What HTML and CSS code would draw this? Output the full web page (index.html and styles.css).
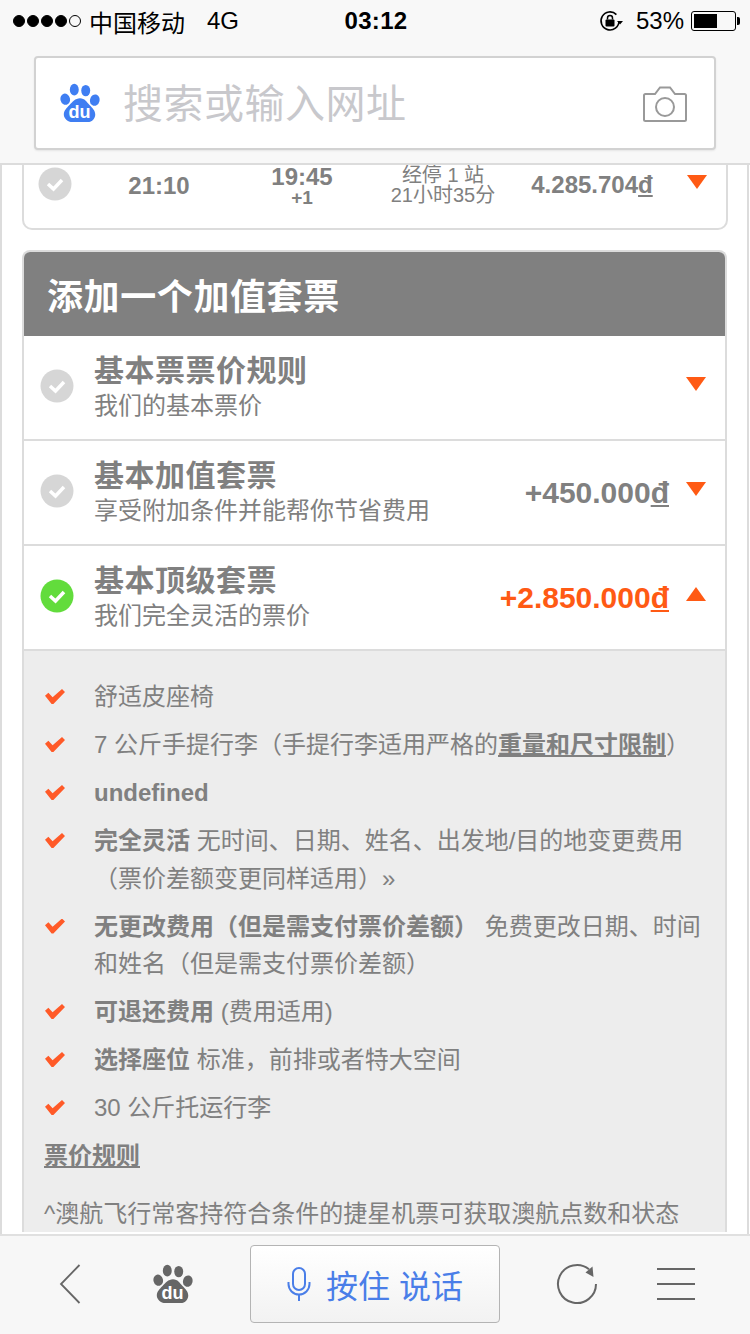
FILE: index.html
```html
<!DOCTYPE html>
<html lang="zh">
<head>
<meta charset="utf-8">
<title>添加一个加值套票</title>
<link rel="stylesheet" href="styles.css">
</head>
<body>
<div class="app">
  <header class="chrome">
    <div class="status">
      <div class="status-left">
        <span class="signal"><i class="on"></i><i class="on"></i><i class="on"></i><i class="on"></i><i></i></span>
        <span class="carrier">中国移动</span>
        <span class="net">4G</span>
      </div>
      <div class="clock">03:12</div>
      <div class="status-right">
        <svg class="lock" width="24" height="22" viewBox="0 0 24 22"><path d="M20 11a9 9 0 1 1-2.600-6.400" fill="none" stroke="#000" stroke-width="1.600"/><path d="M18 11h6l-3 3.500z" fill="#000"/><rect x="6.500" y="9.500" width="9" height="7" rx="1" fill="#000"/><path d="M8.500 9.500V8a2.500 2.500 0 0 1 5 0v1.500" fill="none" stroke="#000" stroke-width="1.500"/></svg>
        <span class="pct">53%</span>
        <span class="battery"><span class="battery-fill"></span></span><span class="battery-tip"></span>
      </div>
    </div>
    <div class="search">
      <svg class="paw" width="40" height="40" viewBox="0 0 42 42"><g fill="#3f7ef2"><ellipse cx="5.500" cy="17" rx="5" ry="6" transform="rotate(-15 5.500 17)"/><ellipse cx="15" cy="7" rx="4.700" ry="6.200"/><ellipse cx="27" cy="8" rx="4.700" ry="6"/><ellipse cx="36.500" cy="18" rx="5" ry="6" transform="rotate(15 36.500 18)"/><path d="M21 16c5 0 7 4 10 7s6 6 6 10-3 8-8 8H13c-5 0-9-4-9-8s3-7 6-10 6-7 11-7z"/></g><text class="paw-text" x="20.500" y="37" text-anchor="middle">du</text></svg>
      <span class="placeholder">搜索或输入网址</span>
      <svg class="camera" width="46" height="40" viewBox="0 0 46 40"><path d="M2 12.500a1.500 1.500 0 0 1 1.500-1.500H13l5-6.500h10l5 6.500h9.500a1.500 1.500 0 0 1 1.500 1.500v24a1.500 1.500 0 0 1-1.500 1.500h-39A1.500 1.500 0 0 1 2 36.500z" fill="none" stroke="#999" stroke-width="2"/><circle cx="23" cy="24" r="9" fill="none" stroke="#999" stroke-width="2"/></svg>
    </div>
  </header>

  <main class="page">
    <section class="flight-card">
      <div class="flight-row">
        <span class="flight-check"><svg width="34" height="34" viewBox="0 0 34 34"><circle cx="17" cy="17" r="16.500" fill="#d6d6d6"/><path d="M10 17l5.500 5L24 13" fill="none" stroke="#fff" stroke-width="3.500"/></svg></span>
        <span class="f-time">21:10</span>
        <span class="f-time f-arr">19:45<small>+1</small></span>
        <span class="f-stops">经停 1 站<br>21小时35分</span>
        <span class="f-price">4.285.704<u class="dong">đ</u></span>
        <span class="tri down f-tri"></span>
      </div>
    </section>

    <section class="offers">
      <h2 class="offers-head">添加一个加值套票</h2>

      <div class="offer">
        <svg class="tick" width="34" height="34" viewBox="0 0 34 34"><circle cx="17" cy="17" r="16.500" fill="#d6d6d6"/><path d="M10 17l5.500 5L24 13" fill="none" stroke="#fff" stroke-width="3.500"/></svg>
        <div class="offer-text"><div class="offer-title">基本票票价规则</div><div class="offer-sub">我们的基本票价</div></div>
        <span class="tri down"></span>
      </div>

      <div class="offer">
        <svg class="tick" width="34" height="34" viewBox="0 0 34 34"><circle cx="17" cy="17" r="16.500" fill="#d6d6d6"/><path d="M10 17l5.500 5L24 13" fill="none" stroke="#fff" stroke-width="3.500"/></svg>
        <div class="offer-text"><div class="offer-title">基本加值套票</div><div class="offer-sub">享受附加条件并能帮你节省费用</div></div>
        <span class="offer-price">+450.000<u class="dong">đ</u></span>
        <span class="tri down"></span>
      </div>

      <div class="offer">
        <svg class="tick" width="34" height="34" viewBox="0 0 34 34"><circle cx="17" cy="17" r="16.500" fill="#62dc3c"/><path d="M10 17l5.500 5L24 13" fill="none" stroke="#fff" stroke-width="3.500"/></svg>
        <div class="offer-text"><div class="offer-title">基本顶级套票</div><div class="offer-sub">我们完全灵活的票价</div></div>
        <span class="offer-price active">+2.850.000<u class="dong">đ</u></span>
        <span class="tri up"></span>
      </div>

      <div class="details">
        <ul class="features">
          <li>舒适皮座椅</li>
          <li>7 公斤手提行李（手提行李适用严格的<b class="link">重量和尺寸限制</b>）</li>
          <li><b>undefined</b></li>
          <li><b>完全灵活</b> 无时间、日期、姓名、出发地/目的地变更费用（票价差额变更同样适用）»</li>
          <li><b>无更改费用（但是需支付票价差额）</b> 免费更改日期、时间和姓名（但是需支付票价差额）</li>
          <li><b>可退还费用</b> (费用适用)</li>
          <li><b>选择座位</b> 标准，前排或者特大空间</li>
          <li>30 公斤托运行李</li>
        </ul>
        <a class="rules link">票价规则</a>
        <p class="note">^澳航飞行常客持符合条件的捷星机票可获取澳航点数和状态</p>
      </div>
    </section>
  </main>

  <footer class="toolbar">
    <svg class="tb-back" width="22" height="42" viewBox="0 0 22 42"><path d="M20.500 2L2 21l18.500 19" fill="none" stroke="#666" stroke-width="1.800"/></svg>
    <svg class="tb-paw" width="40" height="40" viewBox="0 0 42 42"><g fill="#666"><ellipse cx="5.500" cy="17" rx="5" ry="6" transform="rotate(-15 5.500 17)"/><ellipse cx="15" cy="7" rx="4.700" ry="6.200"/><ellipse cx="27" cy="8" rx="4.700" ry="6"/><ellipse cx="36.500" cy="18" rx="5" ry="6" transform="rotate(15 36.500 18)"/><path d="M21 16c5 0 7 4 10 7s6 6 6 10-3 8-8 8H13c-5 0-9-4-9-8s3-7 6-10 6-7 11-7z"/></g><text class="paw-text" x="20.500" y="37" text-anchor="middle">du</text></svg>
    <div class="talk">
      <svg width="24" height="34" viewBox="0 0 24 34"><rect x="6" y="1" width="12" height="22" rx="6" fill="none" stroke="#4a7ee8" stroke-width="2"/><path d="M1.500 15v2a10.500 10.500 0 0 0 21 0v-2M12 28v6" fill="none" stroke="#4a7ee8" stroke-width="2"/></svg>
      <span>按住 说话</span>
    </div>
    <svg class="tb-reload" width="42" height="42" viewBox="0 0 42 42"><path d="M40 21a19 19 0 1 1-7-14.700" fill="none" stroke="#666" stroke-width="2"/><path d="M36.500 3.500l1 10.500-8-4.500z" fill="#666"/></svg>
    <div class="tb-menu"><i></i><i></i><i></i></div>
  </footer>
</div>
</body>
</html>
```

FILE: styles.css
```css
* { box-sizing: border-box; }
html, body { margin: 0; padding: 0; }
body {
  font-family: "Liberation Sans", "Noto Sans CJK SC", sans-serif;
  color: #808080;
  background: #fff;
}
.app {
  width: 750px;
  height: 1334px;
  display: flex;
  flex-direction: column;
  overflow: hidden;
}

/* top chrome */
.chrome {
  height: 165px;
  flex: none;
  background: #f8f8f8;
  border-bottom: 2px solid #dcdcdc;
  padding-top: 1px;
}
.status {
  height: 40px;
  display: flex;
  align-items: center;
  justify-content: space-between;
  padding: 0 11px 0 13px;
  color: #000;
}
.status-left, .status-right { display: flex; align-items: center; width: 270px; }
.status-right { justify-content: flex-end; }
.signal { display: flex; gap: 2px; margin-right: 8px; }
.signal i {
  width: 12px;
  height: 12px;
  border-radius: 50%;
  border: 1px solid #000;
}
.signal i.on { background: #000; }
.carrier { font-size: 24px; }
.net { font-size: 24px; margin-left: 22px; }
.clock { font-size: 24px; font-weight: 700; letter-spacing: .3px; }
.lock { margin-right: 13px; }
.pct { font-size: 24px; margin-right: 7px; }
.battery {
  width: 45px;
  height: 20px;
  border: 1.500px solid #000;
  border-radius: 3px;
  padding: 2px;
  display: block;
}
.battery-fill { display: block; width: 23px; height: 100%; background: #000; }
.battery-tip { width: 3px; height: 8px; background: #000; margin-left: 1px; border-radius: 0 2px 2px 0; margin-right: -1px; }
.search {
  margin: 15px 34px 0;
  height: 94px;
  background: #fff;
  border: 2px solid #d2d2d2;
  border-radius: 4px;
  display: flex;
  align-items: center;
  padding: 0 26px 0 24px;
  box-shadow: 0 1px 2px rgba(0,0,0,.08);
}
.paw { flex: none; margin-right: 23px; }
.paw-text { font: 700 19px "Liberation Sans", sans-serif; fill: #fff; }
.placeholder { font-size: 40px; color: #c8c8cc; flex: 1; line-height: 1; letter-spacing: .5px; padding-top: 2px; }
.camera { flex: none; }

/* page */
.page {
  flex: 1;
  min-height: 0;
  overflow: hidden;
  padding: 0 20px;
  border-left: 2px solid #dcdcdc;
  border-right: 2px solid #dcdcdc;
  margin-right: 1px;
}
.flight-card {
  margin: -20px 0 0 0;
  height: 85px;
  border: 2px solid #dcdcdc;
  border-radius: 10px;
  width: 706px;
}
.flight-row {
  height: 76px;
  padding-left: 14px;
  display: grid;
  grid-template-columns: 34px 174px 112px 170px 128px 51px;
  align-items: center;
}
.f-time { font-size: 24px; font-weight: 700; text-align: center; line-height: 25px; }
.f-arr small { display: block; font-size: 19px; line-height: 17px; }
.f-stops { font-size: 20px; line-height: 20px; text-align: center; }
.f-price { font-size: 24px; font-weight: 700; text-align: center; }
.flight-check { line-height: 0; margin-top: -3px; }
.f-tri { align-self: start; margin: 28px 0 0 31px; }
.dong { text-decoration-thickness: 2px; text-underline-offset: 2px; }

.tri { width: 0; height: 0; border-left: 10px solid transparent; border-right: 10px solid transparent; flex: none; }
.tri.down { border-top: 14px solid #ff5a14; }
.tri.up { border-bottom: 14px solid #ff5a14; }

.offers {
  margin-top: 20px;
  width: 705px;
  border: 2px solid #dcdcdc;
  border-bottom: 0;
  border-radius: 8px 8px 0 0;
  overflow: hidden;
}
.offers-head {
  margin: 0;
  height: 84px;
  background: #808080;
  color: #fff;
  font-size: 36px;
  font-weight: 700;
  letter-spacing: .6px;
  display: flex;
  align-items: center;
  padding-left: 23px;
}
.offer {
  height: 105px;
  border-bottom: 2px solid #dcdcdc;
  background: #fff;
  display: flex;
  align-items: center;
  padding: 0 19px 0 16px;
}
.offer .tick { flex: none; margin: -4px 20px 0 0; }
.offer-text { flex: 1; min-width: 0; }
.offer-title { font-size: 30px; font-weight: 700; line-height: 36px; letter-spacing: .5px; }
.offer-sub { font-size: 24px; line-height: 34px; }
.offer-price { font-size: 30px; font-weight: 700; margin: 1px 17px 0 0; }
.offer-price.active { color: #ff5a14; }
.offer .tri { align-self: flex-start; margin-top: 41px; margin-left: auto; }

.details {
  background: #ededed;
  padding: 27px 20px 0;
  font-size: 24px;
  line-height: 37.500px;
}
.features { list-style: none; margin: 0; padding: 0; }
.features li {
  position: relative;
  padding-left: 50px;
  margin-bottom: 10.500px;
}
.features li::before {
  content: "";
  position: absolute;
  left: 1px;
  top: 11px;
  width: 20px;
  height: 15px;
  background: #ff5a28;
  clip-path: polygon(0 45%, 17% 25%, 38% 55%, 85% 0, 100% 20%, 42% 100%, 33% 100%);
}
.link { text-decoration: underline; font-weight: 700; }
.rules { display: block; margin-top: 1px; }
.note { margin: 20px 0 0; white-space: nowrap; }

/* bottom toolbar */
.toolbar {
  height: 100px;
  flex: none;
  background: #f7f7f7;
  border-top: 2px solid #e0e0e0;
  display: flex;
  align-items: center;
  padding: 0 0 2px 59px;
}
.tb-back { flex: none; margin-right: 72px; }
.tb-paw { flex: none; margin-right: 57px; }
.talk {
  width: 250px;
  height: 78px;
  border: 1px solid #b4b4b4;
  border-radius: 4px;
  background: linear-gradient(#ffffff, #f2f2f2);
  display: flex;
  align-items: center;
  justify-content: center;
  gap: 15px;
  color: #4a7ee8;
  font-size: 32px;
  margin-right: 56px;
}
.tb-reload { flex: none; margin-right: 59px; }
.tb-menu { display: flex; flex-direction: column; gap: 13px; width: 38px; }
.tb-menu i { display: block; height: 2px; background: #666; }
```
